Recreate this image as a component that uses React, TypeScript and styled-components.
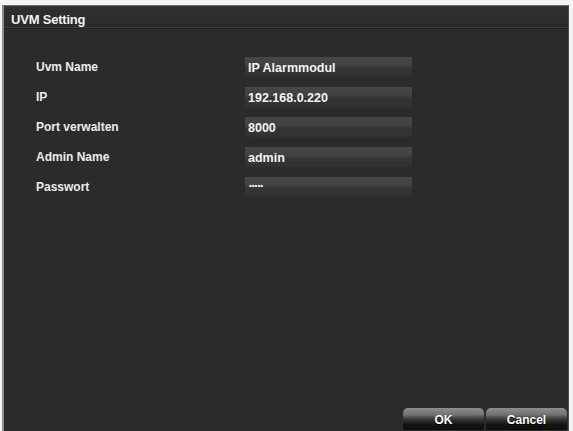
import React from 'react';
import styled, { createGlobalStyle } from 'styled-components';

interface Field {
  label: string;
  value: string;
}

const fields: Field[] = [
  { label: 'Uvm Name', value: 'IP Alarmmodul' },
  { label: 'IP', value: '192.168.0.220' },
  { label: 'Port verwalten', value: '8000' },
  { label: 'Admin Name', value: 'admin' },
  { label: 'Passwort', value: '•••••' },
];

const App: React.FC = () => {
  return (
    <>
      <GlobalStyle />
      <Window>
        <TitleBar>UVM Setting</TitleBar>
        <Form>
          {fields.map((field) => (
            <Row key={field.label}>
              <Label>{field.label}</Label>
              <Input $small={field.label === 'Passwort'}>{field.value}</Input>
            </Row>
          ))}
        </Form>
        <Footer>
          <Button>OK</Button>
          <Button>Cancel</Button>
        </Footer>
      </Window>
    </>
  );
};

const GlobalStyle = createGlobalStyle`
  html, body {
    margin: 0;
    padding: 0;
    background: #f4f4f4;
  }
  body {
    font-family: "Liberation Sans", Arial, sans-serif;
  }
`;

const Window = styled.div`
  margin: 5px 0 0 2px;
  width: 567px;
  height: 426px;
  box-sizing: border-box;
  background: #2b2b2b;
  border-left: 2px solid #8c8c8c;
  border-top: 1px solid #6e6e6e;
  border-right: 1px solid #4a4a4a;
  display: flex;
  flex-direction: column;
  color: #f2f2f2;
`;

const TitleBar = styled.div`
  height: 22px;
  padding: 6px 0 0 7px;
  box-sizing: border-box;
  font-size: 13px;
  font-weight: bold;
  letter-spacing: -0.2px;
  background: linear-gradient(#303030, #2a2a2a);
  border-bottom: 1px solid #3c3c3c;
  box-shadow: 0 1px 0 #222;
`;

const Form = styled.div`
  padding: 29px 0 0 32px;
  display: flex;
  flex-direction: column;
  gap: 10px;
`;

const Row = styled.div`
  display: grid;
  grid-template-columns: 209px 167px;
  align-items: center;
  height: 20px;
`;

const Label = styled.div`
  font-size: 12px;
  font-weight: bold;
  color: #ececec;
`;

const Input = styled.div<{ $small?: boolean }>`
  height: 20px;
  box-sizing: border-box;
  padding: ${(p) => (p.$small ? '0 0 4px 4px' : '1px 0 0 3px')};
  display: flex;
  align-items: center;
  font-size: ${(p) => (p.$small ? '8px' : '12.5px')};
  font-weight: bold;
  color: #f4f4f4;
  background: linear-gradient(#474747 0%, #414141 45%, #343434 55%, #323232 100%);
  border-radius: 1px;
`;

const Footer = styled.div`
  margin-top: auto;
  display: flex;
  justify-content: flex-end;
  gap: 2px;
  padding: 0 1px 1px 0;
`;

const Button = styled.button`
  width: 81px;
  height: 22px;
  border: none;
  border-radius: 5px 5px 2px 2px;
  background: linear-gradient(#8e8e8e 0%, #727272 30%, #3a3a3a 50%, #151515 75%, #0c0c0c 100%);
  color: #fff;
  font-family: "Liberation Sans", Arial, sans-serif;
  font-size: 12px;
  font-weight: bold;
  padding: 1px 0 0;
  text-shadow: 0 1px 1px #000;
`;

export default App;
